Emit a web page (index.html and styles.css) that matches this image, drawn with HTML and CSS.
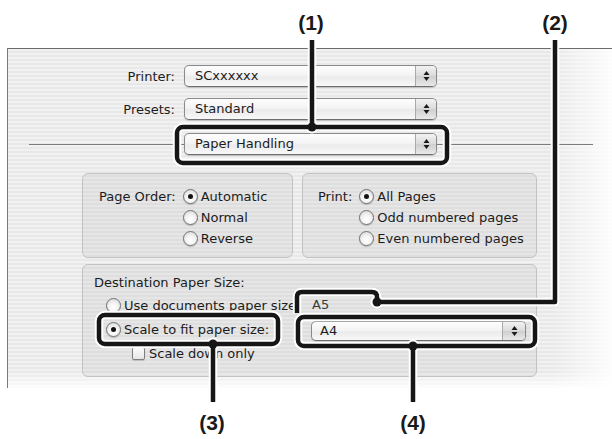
FILE: index.html
```html
<!DOCTYPE html>
<html lang="en">
<head>
  <meta charset="UTF-8">
  <meta name="viewport" content="width=device-width, initial-scale=1.0">
  <title>Paper Handling</title>
  <link rel="stylesheet" href="styles.css">
</head>
<body>
  <div class="page">
    <div class="window">
      <div class="form-grid">
        <span class="form-label">Printer:</span>
        <div class="popup">
          <span class="popup-text">SCxxxxxx</span>
          <span class="popup-arrows"><svg width="7" height="12" viewBox="0 0 7 12"><path d="M3.5 1 L6.5 5 H0.5 Z M0.5 7 H6.5 L3.5 11 Z"/></svg></span>
        </div>
        <span class="form-label">Presets:</span>
        <div class="popup">
          <span class="popup-text">Standard</span>
          <span class="popup-arrows"><svg width="7" height="12" viewBox="0 0 7 12"><path d="M3.5 1 L6.5 5 H0.5 Z M0.5 7 H6.5 L3.5 11 Z"/></svg></span>
        </div>
      </div>

      <div class="pane-row">
        <div class="rule rule-left"></div>
        <div class="popup">
          <span class="popup-text">Paper Handling</span>
          <span class="popup-arrows"><svg width="7" height="12" viewBox="0 0 7 12"><path d="M3.5 1 L6.5 5 H0.5 Z M0.5 7 H6.5 L3.5 11 Z"/></svg></span>
        </div>
        <div class="rule rule-right"></div>
      </div>

      <div class="groups">
        <div class="group group-order">
          <span class="group-label">Page Order:</span>
          <div class="options">
            <div class="option"><span class="radio checked"></span>Automatic</div>
            <div class="option"><span class="radio"></span>Normal</div>
            <div class="option"><span class="radio"></span>Reverse</div>
          </div>
        </div>
        <div class="group group-print">
          <span class="group-label">Print:</span>
          <div class="options">
            <div class="option"><span class="radio checked"></span>All Pages</div>
            <div class="option"><span class="radio"></span>Odd numbered pages</div>
            <div class="option"><span class="radio"></span>Even numbered pages</div>
          </div>
        </div>
      </div>

      <div class="group group-dest">
        <span class="dest-title">Destination Paper Size:</span>
        <div class="option indent"><span class="radio"></span>Use documents paper size</div>
        <span class="paper-name">A5</span>
        <div class="option indent"><span class="radio checked"></span>Scale to fit paper size:</div>
        <div class="popup popup-small">
          <span class="popup-text">A4</span>
          <span class="popup-arrows"><svg width="7" height="12" viewBox="0 0 7 12"><path d="M3.5 1 L6.5 5 H0.5 Z M0.5 7 H6.5 L3.5 11 Z"/></svg></span>
        </div>
        <div class="option indent-check"><span class="checkbox"></span>Scale down only</div>
      </div>
    </div>

    <!-- callouts drawn over the dialog -->
    <svg class="callouts" width="612" height="439" viewBox="0 0 612 439">
      <defs>
        <g id="marks">
          <rect x="177" y="127" width="270" height="36" rx="6"/>
          <path d="M312 40 V127"/>
          <path d="M555 40 V302 H377"/>
          <path d="M297 313 V297 Q297 292 302 292 H372 Q377 292 377 297 V302"/>
          <rect x="99" y="315" width="179" height="29" rx="6"/>
          <path d="M213 344 V402"/>
          <rect x="298" y="317" width="237" height="29" rx="6"/>
          <path d="M413 346 V402"/>
        </g>
        <g id="dots">
          <circle cx="312" cy="127" r="4.5"/>
          <circle cx="377" cy="302" r="4.5"/>
          <circle cx="213" cy="344" r="4.5"/>
          <circle cx="413" cy="346" r="4.5"/>
        </g>
      </defs>
      <use href="#marks" class="halo"/>
      <use href="#dots" class="dot-halo"/>
      <use href="#marks" class="ink"/>
      <use href="#dots" class="dot"/>
      <text class="callout-label" x="311" y="30">(1)</text>
      <text class="callout-label" x="555" y="30">(2)</text>
      <text class="callout-label" x="212" y="430">(3)</text>
      <text class="callout-label" x="413" y="430">(4)</text>
    </svg>
  </div>
</body>
</html>
```

FILE: styles.css
```css
body {
  margin: 0;
  background: #fff;
  font-family: "DejaVu Sans", sans-serif;
  font-size: 13px;
  color: #1c1c1c;
}

.page {
  position: relative;
  width: 612px;
  height: 439px;
  padding: 48px 0 0 7px;
  box-sizing: border-box;
  overflow: hidden;
}

.window {
  height: 340px;
  box-sizing: border-box;
  border-top: 1px solid #6c6c6c;
  border-left: 1px solid #7a7a7a;
  background:
    linear-gradient(to right, rgba(255,255,255,0) 90%, rgba(255,255,255,0.9)),
    linear-gradient(to bottom, rgba(255,255,255,0) 95%, rgba(255,255,255,0.9)),
    repeating-linear-gradient(to bottom, #f1f1f1 0 2px, #e8e8e8 2px 4px);
  white-space: nowrap;
}

.form-grid {
  display: grid;
  grid-template-columns: 167px 253px;
  grid-auto-rows: 22px;
  column-gap: 9px;
  row-gap: 11px;
  margin-top: 16px;
  align-items: center;
}

.form-label {
  text-align: right;
}

.popup {
  display: flex;
  height: 22px;
  box-sizing: border-box;
  border: 1px solid #8a8a8a;
  border-bottom-color: #6e6e6e;
  border-radius: 5px;
  background: linear-gradient(to bottom, #fdfdfd 0%, #f4f4f4 45%, #ebebeb 55%, #f8f8f8 100%);
  box-shadow: 0 1px 1px rgba(0,0,0,0.18);
  overflow: hidden;
}

.popup-text {
  flex: 1;
  padding-left: 10px;
  line-height: 20px;
}

.popup-arrows {
  width: 20px;
  display: flex;
  align-items: center;
  justify-content: center;
  border-left: 1px solid #a9a9a9;
  background: linear-gradient(to bottom, #f2f2f2 0%, #dcdcdc 48%, #cfcfcf 52%, #e9e9e9 100%);
}

.popup-arrows svg {
  fill: #1a1a1a;
}

.pane-row {
  display: flex;
  align-items: center;
  margin: 13px 0 0 21px;
}

.pane-row .popup {
  width: 253px;
}

.rule {
  height: 1px;
  background: #7c7c7c;
}

.rule-left {
  width: 155px;
}

.rule-right {
  width: 156px;
}

.groups {
  display: flex;
  gap: 9px;
  margin: 18px 0 0 74px;
}

.group {
  box-sizing: border-box;
  border: 1px solid #c2c2c2;
  border-radius: 6px;
  background: rgba(0,0,0,0.045);
}

.group-order,
.group-print {
  display: flex;
  column-gap: 7px;
  height: 85px;
  padding: 12px 0 0 16px;
}

.group-order {
  width: 211px;
}

.group-print {
  width: 235px;
  padding-left: 15px;
}

.group-label {
  line-height: 21px;
}

.options {
  display: flex;
  flex-direction: column;
}

.option {
  display: flex;
  align-items: center;
  gap: 3px;
  height: 21px;
}

.radio {
  width: 15px;
  height: 15px;
  box-sizing: border-box;
  border: 1px solid #727272;
  border-radius: 50%;
  background: radial-gradient(circle at 50% 65%, #ffffff 0%, #f3f3f3 45%, #cfcfcf 100%);
  box-shadow: 0 1px 1px rgba(0,0,0,0.2);
  display: flex;
  align-items: center;
  justify-content: center;
}

.radio.checked::after {
  content: "";
  width: 5px;
  height: 5px;
  border-radius: 50%;
  background: #111;
}

.checkbox {
  width: 13px;
  height: 13px;
  box-sizing: border-box;
  border: 1px solid #7e7e7e;
  border-radius: 2px;
  background: linear-gradient(to bottom, #fafafa, #e6e6e6);
  box-shadow: 0 1px 1px rgba(0,0,0,0.15);
}

.group-dest {
  display: grid;
  grid-template-columns: 217px 215px;
  grid-template-rows: 20px 24px 24px 24px;
  width: 455px;
  height: 113px;
  margin: 6px 0 0 74px;
  padding: 8px 0 0 11px;
}

.dest-title {
  grid-column: 1 / 3;
  line-height: 20px;
}

.group-dest .option {
  height: 24px;
}

.indent {
  margin-left: 12px;
}

.indent-check {
  margin-left: 38px;
  gap: 4px;
}

.paper-name {
  padding-left: 1px;
  line-height: 24px;
  color: #3a3a3a;
}

.popup-small {
  height: 20px;
  align-self: end;
}

.popup-small .popup-text {
  padding-left: 8px;
  line-height: 18px;
}

.popup-small .popup-arrows {
  width: 22px;
}

.callouts {
  position: absolute;
  left: 0;
  top: 0;
  pointer-events: none;
}

.halo {
  fill: none;
  stroke: #fff;
  stroke-width: 8.5;
  stroke-linejoin: round;
}

.ink {
  fill: none;
  stroke: #161616;
  stroke-width: 4.5;
  stroke-linejoin: round;
}

.dot-halo {
  fill: #161616;
  stroke: #fff;
  stroke-width: 4;
}

.dot {
  fill: #161616;
}

.callout-label {
  font-family: "Liberation Sans", Arial, sans-serif;
  font-weight: bold;
  font-size: 21px;
  fill: #1a1a1a;
  text-anchor: middle;
}
```
